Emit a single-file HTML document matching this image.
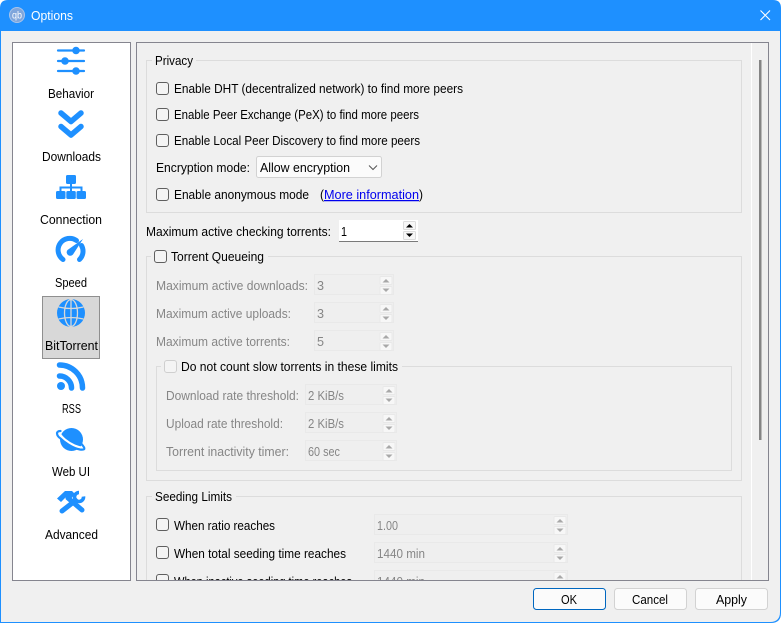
<!DOCTYPE html>
<html><head><meta charset="utf-8"><title>Options</title>
<style>html,body{margin:0;padding:0;background:#fff;width:781px;height:623px;overflow:hidden}svg{display:block}
text{font-family:"Liberation Sans",sans-serif;font-size:12.5px;fill:#000}
.d{fill:#868686}
.cb{fill:#f4f4f4;stroke:#5f5f5f;stroke-width:1}
.cd{fill:#f4f4f4;stroke:#cfcfcf;stroke-width:1}
.gb{fill:none;stroke:#dcdcdc;stroke-width:1}
.sp{fill:#efefef;stroke:#e9e9e9;stroke-width:1}
.sb{fill:#f7f7f7;stroke:#e8e8e8;stroke-width:1}
.ta{fill:#a8a8a8}
.ic{fill:#1e90ff}
.is{fill:none;stroke:#1e90ff;stroke-linecap:round;stroke-linejoin:round}
</style></head><body>
<svg xmlns="http://www.w3.org/2000/svg" width="781" height="623" viewBox="0 0 781 623">
<defs>
<clipPath id="pc"><rect x="137" y="43" width="614" height="537"/></clipPath>
<g id="spin"><rect class="sb" x="0.5" y="0.5" width="12" height="8" rx="1"/><rect class="sb" x="0.5" y="10.5" width="12" height="8" rx="1"/><path class="ta" d="M3 6.5 6.5 3 10 6.5Z"/><path class="ta" d="M3 12.5H10L6.5 16Z"/></g>
<g id="bspin"><rect fill="#f7f7f7" stroke="#dcdcdc" x="0.5" y="0.5" width="12" height="8" rx="1"/><rect fill="#f7f7f7" stroke="#dcdcdc" x="0.5" y="10.5" width="12" height="8" rx="1"/><path d="M3 6.5 6.5 3 10 6.5Z"/><path d="M3 12.5H10L6.5 16Z"/></g>
</defs>
<path d="M0 623V8Q0 0 8 0H773Q781 0 781 8V613Q781 623 771 623Z" fill="#1e90ff"/>
<path d="M1 31H780V612Q780 622 770 622H1Z" fill="#f0f0f0"/>
<circle cx="17" cy="15" r="7.5" fill="#7fa6dc" stroke="#a9c4ea"/>
<text x="12" y="18.500" style="font-size:10px;fill:#fff" textLength="10" lengthAdjust="spacingAndGlyphs">qb</text>
<text x="31" y="20" style="fill:#fff" textLength="42" lengthAdjust="spacingAndGlyphs">Options</text>
<path d="M760.5 10.5 770 20M770 10.5 760.5 20" stroke="#fff" stroke-width="1.1" fill="none"/>

<rect x="12.5" y="42.5" width="118" height="538" fill="#fff" stroke="#85858f"/>
<rect x="42.5" y="296.5" width="57" height="62" fill="#d8d8d8" stroke="#8f8f8f"/>

<g class="is" stroke-width="2.200"><path d="M58 50.500H84M58 61H84M58 71H84"/></g>
<circle class="ic" cx="76" cy="50.500" r="3.800"/><circle class="ic" cx="65" cy="61" r="3.800"/><circle class="ic" cx="76" cy="71" r="3.800"/>
<path class="is" stroke-width="5.500" d="M61 113 71 121.500 81 113M61 126.500 71 135 81 126.500"/>
<g class="ic"><rect x="66" y="175" width="10" height="9" rx="1.500"/><rect x="56" y="191" width="9.500" height="8" rx="1.500"/><rect x="66.300" y="191" width="9.500" height="8" rx="1.500"/><rect x="76.500" y="191" width="9.500" height="8" rx="1.500"/></g>
<path d="M71 183V191M60.500 191V187.500H81.500V191" fill="none" stroke="#1e90ff" stroke-width="2"/>
<path class="is" stroke-width="5" d="M63 259.500A11.500 11.500 0 0 1 76.500 240.500M81.500 245.500A11.500 11.500 0 0 1 79.500 259.500"/>
<path class="ic" d="M83 239 73 254.500A3.500 3.500 0 0 1 67.500 250Z"/>
<circle class="ic" cx="71" cy="313" r="14"/>
<g fill="none" stroke="#d8d8d8" stroke-width="1.300"><ellipse cx="71" cy="313" rx="6.500" ry="13.500"/><path d="M71 299.500V326.500M58.500 307Q71 310 83.500 307M58.500 319Q71 316 83.500 319"/></g>
<circle class="ic" cx="61" cy="386" r="4"/>
<path class="is" stroke-width="5.500" d="M59.500 365A23 23 0 0 1 82.500 388M59.500 376A12 12 0 0 1 71.500 388"/>
<circle class="ic" cx="71.500" cy="439.500" r="11.500"/>
<path d="M59 430C55 434 69 447 84 449" fill="none" stroke="#fff" stroke-width="4"/>
<path d="M60.500 431C55 431 57 436 60 438M81.500 444C86 449 85 450 80 449.500C72 448 64 442 60 438" fill="none" stroke="#1e90ff" stroke-width="2.200" stroke-linecap="round"/>
<path class="is" stroke-width="5" d="M68 498 82 510M75.500 500.500 62 511"/>
<path class="ic" d="M57 498.500 65 491H72L75 494 70 500 66 497 61 502Z"/>
<path d="M83.500 496.500A4.500 4.500 0 1 1 79 492.500" fill="none" stroke="#1e90ff" stroke-width="3.600"/>

<g text-anchor="start">
<text x="48" y="98" textLength="46" lengthAdjust="spacingAndGlyphs">Behavior</text>
<text x="42" y="161" textLength="59" lengthAdjust="spacingAndGlyphs">Downloads</text>
<text x="40" y="224" textLength="62" lengthAdjust="spacingAndGlyphs">Connection</text>
<text x="55" y="287" textLength="32" lengthAdjust="spacingAndGlyphs">Speed</text>
<text x="45" y="350" textLength="53" lengthAdjust="spacingAndGlyphs">BitTorrent</text>
<text x="62" y="413" style="font-size:13px" textLength="19" lengthAdjust="spacingAndGlyphs">RSS</text>
<text x="52" y="476" textLength="38" lengthAdjust="spacingAndGlyphs">Web UI</text>
<text x="45" y="539" textLength="53" lengthAdjust="spacingAndGlyphs">Advanced</text>
</g>

<rect x="136.500" y="42.500" width="632" height="538" fill="#f0f0f0" stroke="#85858f"/>
<path d="M751.500 43V580" stroke="#fff"/>
<rect x="759" y="60" width="2.500" height="380" fill="#858585"/>

<g clip-path="url(#pc)">
<rect class="gb" x="146.500" y="60.500" width="595" height="152"/>
<rect x="152" y="55" width="44" height="12" fill="#f0f0f0"/>
<text x="155" y="65" textLength="38" lengthAdjust="spacingAndGlyphs">Privacy</text>
<rect class="cb" x="156.500" y="82.500" width="12" height="12" rx="2.500"/>
<text x="174" y="93" textLength="289" lengthAdjust="spacingAndGlyphs">Enable DHT (decentralized network) to find more peers</text>
<rect class="cb" x="156.500" y="108.500" width="12" height="12" rx="2.500"/>
<text x="174" y="119" textLength="245" lengthAdjust="spacingAndGlyphs">Enable Peer Exchange (PeX) to find more peers</text>
<rect class="cb" x="156.500" y="134.500" width="12" height="12" rx="2.500"/>
<text x="174" y="145" textLength="246" lengthAdjust="spacingAndGlyphs">Enable Local Peer Discovery to find more peers</text>
<text x="156" y="172" textLength="94" lengthAdjust="spacingAndGlyphs">Encryption mode:</text>
<rect x="256.500" y="156.500" width="125" height="21" rx="2" fill="#fbfbfb" stroke="#d2d2d2"/>
<text x="260" y="172" textLength="90" lengthAdjust="spacingAndGlyphs">Allow encryption</text>
<path d="M369 165.500 373 169.500 377 165.500" fill="none" stroke="#555" stroke-width="1"/>
<rect class="cb" x="156.500" y="188.500" width="12" height="12" rx="2.500"/>
<text x="174" y="199" textLength="135" lengthAdjust="spacingAndGlyphs">Enable anonymous mode</text>
<text x="320" y="199" textLength="4" lengthAdjust="spacingAndGlyphs">(</text>
<text x="324" y="199" style="fill:#0000ee;text-decoration:underline" textLength="95" lengthAdjust="spacingAndGlyphs">More information</text>
<text x="419" y="199" textLength="4" lengthAdjust="spacingAndGlyphs">)</text>

<text x="146" y="236" textLength="185" lengthAdjust="spacingAndGlyphs">Maximum active checking torrents:</text>
<rect x="339" y="220" width="79" height="21" fill="#fff"/>
<rect x="339" y="241" width="79" height="1" fill="#7a7a7a"/>
<text x="341" y="236" textLength="6" lengthAdjust="spacingAndGlyphs">1</text>
<use href="#bspin" x="403" y="221"/>

<rect class="gb" x="146.500" y="256.500" width="595" height="224"/>
<rect x="151" y="250" width="117" height="13" fill="#f0f0f0"/>
<rect class="cb" x="154.500" y="250.500" width="12" height="12" rx="2.500"/>
<text x="171" y="261" textLength="93" lengthAdjust="spacingAndGlyphs">Torrent Queueing</text>

<text class="d" x="156" y="290" textLength="152" lengthAdjust="spacingAndGlyphs">Maximum active downloads:</text>
<rect class="sp" x="314.500" y="274.500" width="79" height="20"/>
<text class="d" x="317" y="290" textLength="7" lengthAdjust="spacingAndGlyphs">3</text>
<use href="#spin" x="379.500" y="276"/>
<text class="d" x="156" y="318" textLength="135" lengthAdjust="spacingAndGlyphs">Maximum active uploads:</text>
<rect class="sp" x="314.500" y="302.500" width="79" height="20"/>
<text class="d" x="317" y="318" textLength="7" lengthAdjust="spacingAndGlyphs">3</text>
<use href="#spin" x="379.500" y="304"/>
<text class="d" x="156" y="346" textLength="134" lengthAdjust="spacingAndGlyphs">Maximum active torrents:</text>
<rect class="sp" x="314.500" y="330.500" width="79" height="20"/>
<text class="d" x="317" y="346" textLength="7" lengthAdjust="spacingAndGlyphs">5</text>
<use href="#spin" x="379.500" y="332"/>

<rect class="gb" x="156.500" y="366.500" width="575" height="104"/>
<rect x="161" y="360" width="241" height="13" fill="#f0f0f0"/>
<rect class="cd" x="164.500" y="360.500" width="12" height="12" rx="2.500"/>
<text x="181" y="371" textLength="217" lengthAdjust="spacingAndGlyphs">Do not count slow torrents in these limits</text>

<text class="d" x="166" y="400" textLength="133" lengthAdjust="spacingAndGlyphs">Download rate threshold:</text>
<rect class="sp" x="305.500" y="384.500" width="91" height="20"/>
<text class="d" x="308" y="400" textLength="36" lengthAdjust="spacingAndGlyphs">2 KiB/s</text>
<use href="#spin" x="382.500" y="386"/>
<text class="d" x="166" y="428" textLength="117" lengthAdjust="spacingAndGlyphs">Upload rate threshold:</text>
<rect class="sp" x="305.500" y="412.500" width="91" height="20"/>
<text class="d" x="308" y="428" textLength="36" lengthAdjust="spacingAndGlyphs">2 KiB/s</text>
<use href="#spin" x="382.500" y="414"/>
<text class="d" x="166" y="456" textLength="123" lengthAdjust="spacingAndGlyphs">Torrent inactivity timer:</text>
<rect class="sp" x="305.500" y="440.500" width="91" height="20"/>
<text class="d" x="308" y="456" textLength="32" lengthAdjust="spacingAndGlyphs">60 sec</text>
<use href="#spin" x="382.500" y="442"/>

<rect class="gb" x="146.500" y="496.500" width="595" height="120"/>
<rect x="152" y="490" width="84" height="12" fill="#f0f0f0"/>
<text x="155" y="501" textLength="77" lengthAdjust="spacingAndGlyphs">Seeding Limits</text>
<rect class="cb" x="156.500" y="518.500" width="12" height="12" rx="2.500"/>
<text x="174" y="530" textLength="101" lengthAdjust="spacingAndGlyphs">When ratio reaches</text>
<rect class="sp" x="374.500" y="514.500" width="193" height="20"/>
<text class="d" x="377" y="530" textLength="21" lengthAdjust="spacingAndGlyphs">1.00</text>
<use href="#spin" x="553.500" y="516"/>
<rect class="cb" x="156.500" y="546.500" width="12" height="12" rx="2.500"/>
<text x="174" y="558" textLength="172" lengthAdjust="spacingAndGlyphs">When total seeding time reaches</text>
<rect class="sp" x="374.500" y="542.500" width="193" height="20"/>
<text class="d" x="377" y="558" textLength="48" lengthAdjust="spacingAndGlyphs">1440 min</text>
<use href="#spin" x="553.500" y="544"/>
<rect class="cb" x="156.500" y="574.500" width="12" height="12" rx="2.500"/>
<text x="174" y="586" textLength="178" lengthAdjust="spacingAndGlyphs">When inactive seeding time reaches</text>
<rect class="sp" x="374.500" y="570.500" width="193" height="20"/>
<text class="d" x="377" y="586" textLength="48" lengthAdjust="spacingAndGlyphs">1440 min</text>
<use href="#spin" x="553.500" y="572"/>
</g>

<rect x="533.500" y="588.500" width="72" height="21" rx="3" fill="#fbfbfb" stroke="#0067c0"/>
<rect x="614.500" y="588.500" width="72" height="21" rx="3" fill="#fbfbfb" stroke="#d2d2d2"/>
<rect x="695.500" y="588.500" width="72" height="21" rx="3" fill="#fbfbfb" stroke="#d2d2d2"/>
<text x="561" y="604" textLength="16" lengthAdjust="spacingAndGlyphs">OK</text>
<text x="632" y="604" textLength="36" lengthAdjust="spacingAndGlyphs">Cancel</text>
<text x="716" y="604" textLength="31" lengthAdjust="spacingAndGlyphs">Apply</text>
</svg>
</body></html>
